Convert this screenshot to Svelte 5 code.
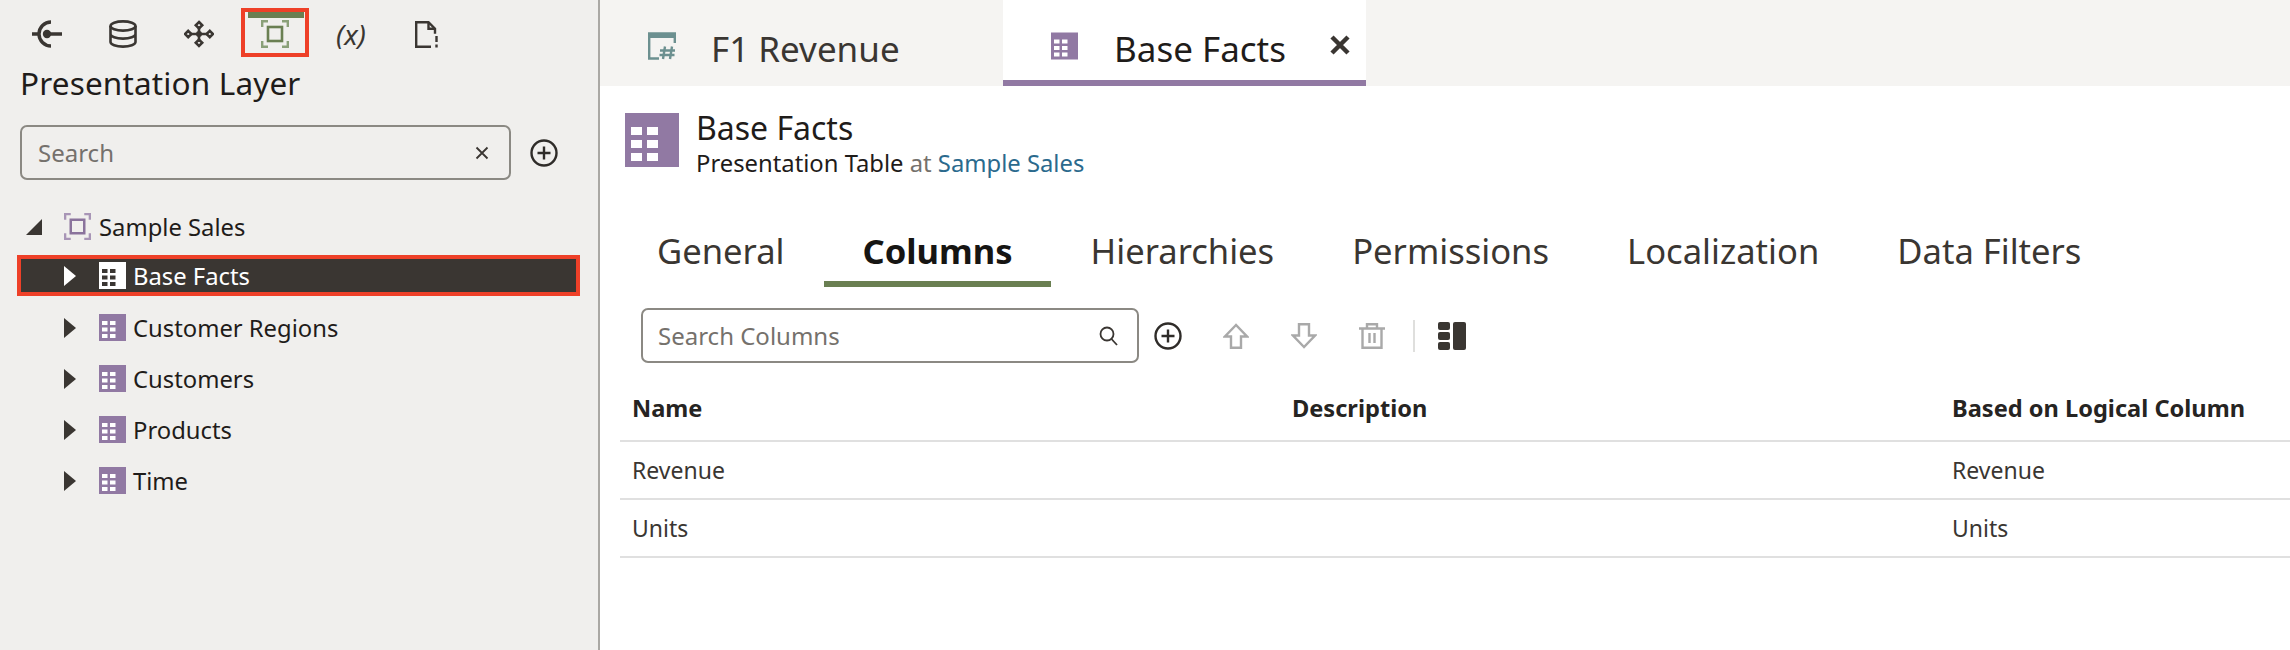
<script>
  const railIcons = ['link', 'db', 'move', 'focus', 'vars', 'doc'];
  const nodes = ['Base Facts', 'Customer Regions', 'Customers', 'Products', 'Time'];
  const detailTabs = ['General', 'Columns', 'Hierarchies', 'Permissions', 'Localization', 'Data Filters'];
  const rows = [
    { name: 'Revenue', description: '', logical: 'Revenue' },
    { name: 'Units', description: '', logical: 'Units' }
  ];
</script>

{#snippet grid(cls)}
  <svg class={cls} viewBox="0 0 54 54">
    <rect class="cell-bg" width="54" height="54" />
    {#each [14, 27, 40] as y}
      <rect class="cell" x="6" {y} width="11" height="8" />
      <rect class="cell" x="22" {y} width="11" height="8" />
    {/each}
  </svg>
{/snippet}

{#snippet focus(cls)}
  <svg class={cls} viewBox="0 0 28 28" fill="none">
    <path class="corners" d="M7 1.2H1.2V7M21 1.2h5.8V7M7 26.8H1.2V21M21 26.8h5.8V21" stroke-width="2.4" />
    <rect class="core" x="7" y="7" width="14" height="14" stroke-width="2.6" />
  </svg>
{/snippet}

{#snippet plus()}
  <svg class="plus" viewBox="0 0 28 28" fill="none" stroke="#2f2c29">
    <circle cx="14" cy="14" r="12.5" stroke-width="2.4" />
    <path d="M14 7.5v13M7.5 14h13" stroke-width="2.4" />
  </svg>
{/snippet}

<div class="shell">
  <aside class="side">
    <div class="rail">
      {#each railIcons as icon}
        <div class="rail-btn" class:on={icon === 'focus'}>
          {#if icon === 'link'}
            <svg width="30" height="28" viewBox="0 0 30 28" fill="none" stroke="#3a3632" stroke-width="3.4">
              <path d="M19 2a12 12 0 1 0 0 24" />
              <path d="M0 14h6M15 14h15" />
              <circle cx="15" cy="14" r="4.2" fill="#3a3632" stroke="none" />
            </svg>
          {:else if icon === 'db'}
            <svg width="28" height="28" viewBox="0 0 28 28" fill="none" stroke="#3a3632" stroke-width="2.6">
              <ellipse cx="14" cy="6" rx="12.5" ry="4.6" />
              <path d="M1.5 6v16c0 2.6 5.6 4.6 12.5 4.6S26.5 24.6 26.5 22V6M1.5 14c0 2.6 5.6 4.6 12.5 4.6s12.5-2 12.5-4.6" />
            </svg>
          {:else if icon === 'move'}
            <svg width="30" height="28" viewBox="0 0 30 28" fill="none" stroke="#3a3632" stroke-width="2.6">
              <path d="M15 2l3.2 3.2L15 8.4l-3.2-3.2zM15 19.6l3.2 3.2L15 26l-3.2-3.2zM4.2 10.8L7.4 14l-3.2 3.2L1 14zM25.8 10.8L29 14l-3.2 3.2L22.6 14z" />
              <path d="M15 8v12M7 14h16" />
              <circle cx="15" cy="14" r="3" fill="#3a3632" stroke="none" />
            </svg>
          {:else if icon === 'focus'}
            {@render focus('focus-green')}
          {:else if icon === 'vars'}
            <span class="vars">(x)</span>
          {:else}
            <svg width="24" height="27" viewBox="0 0 24 27" fill="none" stroke="#3a3632" stroke-width="2.4">
              <path d="M16 25.8H1.2V1.2h12.3l6.5 6.5v5" />
              <path d="M13.5 1.2v6.5H20" />
              <path d="M21.5 15v6M21.5 23.5v3" />
            </svg>
          {/if}
        </div>
      {/each}
    </div>

    <h1 class="side-title">Presentation Layer</h1>

    <div class="side-search">
      <div class="search-box">
        <span class="placeholder">Search</span>
        <svg class="clear" viewBox="0 0 14 14" stroke="#3a3632" stroke-width="1.8">
          <path d="M1.5 1.5l11 11M12.5 1.5l-11 11" />
        </svg>
      </div>
      {@render plus()}
    </div>

    <div class="tree">
      <div class="root">
        <svg class="twist-open" viewBox="0 0 16 16"><path d="M16 0v16H0z" fill="#3a3632" /></svg>
        {@render focus('focus-purple')}
        <span>Sample Sales</span>
      </div>
      {#each nodes as node, i}
        <div class="node" class:selected={i === 0}>
          <svg class="twist" viewBox="0 0 12 20"><path d="M0 0l12 10L0 20z" /></svg>
          {@render grid(i === 0 ? 'node-icon inverse' : 'node-icon')}
          <span>{node}</span>
        </div>
      {/each}
    </div>
  </aside>

  <main class="main">
    <div class="doc-tabs">
      <div class="doc-tab first">
        <svg class="calc" viewBox="0 0 28 28" fill="none" stroke="#6c9090">
          <path d="M11 26.5H1.2V1.5h25.6V11" stroke-width="2.4" />
          <path d="M1 3.5h26" stroke-width="5" />
          <path d="M17 14.5l-2 12.5M24 14.5l-2 12.5M12 18.5h15M11.5 23h15" stroke-width="2.4" />
        </svg>
        <span>F1 Revenue</span>
      </div>
      <div class="doc-tab active">
        {@render grid('tab-icon')}
        <span>Base Facts</span>
        <svg class="close" viewBox="0 0 20 20" stroke="#3a3632" stroke-width="4.5">
          <path d="M2 2l16 16M18 2L2 18" />
        </svg>
      </div>
    </div>

    <header class="head">
      {@render grid('head-icon')}
      <div>
        <div class="head-title">Base Facts</div>
        <div class="head-sub">Presentation Table <span class="at">at</span> <span class="link">Sample Sales</span></div>
      </div>
    </header>

    <nav class="detail-tabs">
      {#each detailTabs as tab}
        <div class="detail-tab" class:current={tab === 'Columns'}>{tab}</div>
      {/each}
    </nav>

    <div class="toolbar">
      <div class="search-box columns-search">
        <span class="placeholder">Search Columns</span>
        <svg class="lens" viewBox="0 0 20 20" fill="none" stroke="#3a3632" stroke-width="1.8">
          <circle cx="8" cy="8" r="6.5" />
          <path d="M12.5 13l5.5 6" />
        </svg>
      </div>
      {@render plus()}
      <svg class="tool up" viewBox="0 0 26 26" fill="none" stroke="#a9a9a9" stroke-width="2.4">
        <path d="M13 2L2 13.5h6V24.8h10V13.5h6z" />
      </svg>
      <svg class="tool down" viewBox="0 0 26 26" fill="none" stroke="#a9a9a9" stroke-width="2.4">
        <path d="M13 24L2 12.5h6V1.2h10v11.3h6z" />
      </svg>
      <svg class="tool trash" viewBox="0 0 26 26" fill="none" stroke="#a9a9a9" stroke-width="2.4">
        <path d="M0 5.5h26M8 5.5V1.2h10v4.3M3.5 5.5v19.3h19V5.5M10.5 10v10M15.5 10v10" />
      </svg>
      <div class="sep"></div>
      <svg class="layout" viewBox="0 0 28 28" fill="#3a3632">
        <rect y="0" width="12" height="8" rx="2" />
        <rect y="10" width="12" height="8" rx="2" />
        <rect y="20" width="12" height="8" rx="2" />
        <rect x="15" width="13" height="28" rx="2" />
      </svg>
    </div>

    <table class="grid-table">
      <thead>
        <tr>
          <th>Name</th>
          <th>Description</th>
          <th>Based on Logical Column</th>
        </tr>
      </thead>
      <tbody>
        {#each rows as row}
          <tr>
            <td>{row.name}</td>
            <td>{row.description}</td>
            <td>{row.logical}</td>
          </tr>
        {/each}
      </tbody>
    </table>
  </main>
</div>

<style>
  :global(body) {
    margin: 0;
    background: #fff;
  }

  .shell {
    display: flex;
    width: 2290px;
    height: 650px;
    overflow: hidden;
    font-family: "Noto Sans", "Open Sans", sans-serif;
    color: #1f1c1a;
  }

  .side {
    width: 600px;
    flex: none;
    box-sizing: border-box;
    height: 650px;
    background: #f0efed;
    border-right: 2px solid #aaa8a4;
  }

  .rail {
    display: flex;
    align-items: center;
    height: 49px;
    padding-top: 8px;
    padding-left: 9px;
  }
  .rail-btn {
    width: 76px;
    height: 49px;
    box-sizing: border-box;
    display: flex;
    align-items: center;
    justify-content: center;
    padding-top: 3px;
  }
  .rail-btn.on {
    width: 68px;
    margin: 0 4px;
    border: 4px solid #ee4028;
    padding-top: 3px;
    background: linear-gradient(#6a7f52, #6a7f52) no-repeat 3px 0 / 56px 6px;
    background-origin: padding-box;
  }
  .vars {
    font-size: 28px;
    font-style: italic;
    color: #3a3632;
  }

  .focus-green {
    width: 28px;
    height: 28px;
  }
  .focus-green .corners { stroke: #8aa078; }
  .focus-green .core { stroke: #6a7f52; }
  .focus-purple {
    width: 27px;
    height: 27px;
    margin-left: 22px;
    margin-right: 8px;
  }
  .focus-purple .corners { stroke: #a895b6; }
  .focus-purple .core { stroke: #8a739c; }

  .side-title {
    margin: 0;
    margin-top: 7px;
    padding-left: 20px;
    height: 50px;
    font-size: 31.5px;
    line-height: 38px;
    font-weight: 400;
    letter-spacing: 0.15px;
  }

  .side-search {
    display: flex;
    align-items: center;
    gap: 19px;
    padding-left: 20px;
    margin-top: 11px;
  }
  .search-box {
    display: flex;
    align-items: center;
    justify-content: space-between;
    box-sizing: border-box;
    width: 491px;
    height: 55px;
    padding: 0 20px 0 16px;
    border: 2px solid #8b8983;
    border-radius: 7px;
    font-size: 24px;
  }
  .placeholder {
    color: #75716c;
  }
  .clear {
    width: 14px;
    height: 14px;
  }
  .plus {
    width: 28px;
    height: 28px;
    flex: none;
  }

  .tree {
    margin-top: 21px;
    font-size: 23.8px;
  }
  .root {
    display: flex;
    align-items: center;
    height: 51px;
    margin-left: 26px;
  }
  .twist-open {
    width: 16px;
    height: 16px;
  }
  .node {
    display: flex;
    align-items: center;
    height: 51px;
    margin-left: 17px;
    width: 563px;
    box-sizing: border-box;
    padding-left: 47px;
  }
  .node .twist {
    width: 12px;
    height: 20px;
    margin-right: 23px;
    fill: #3a3632;
  }
  .node.selected {
    height: 41px;
    margin-top: 3px;
    margin-bottom: 6px;
    padding-left: 43px;
    background: #3a3632;
    border: 4px solid #ee4028;
    color: #fff;
  }
  .node.selected .twist {
    fill: #fff;
  }
  .node-icon {
    width: 27px;
    height: 27px;
    margin-right: 7px;
  }

  .cell-bg { fill: #9179a3; }
  .cell { fill: #fff; }
  .inverse .cell-bg { fill: #fff; }
  .inverse .cell { fill: #3a3632; }

  .main {
    flex: 1;
    min-width: 0;
  }

  .doc-tabs {
    display: flex;
    height: 86px;
    background: #f5f4f2;
  }
  .doc-tab {
    display: flex;
    align-items: center;
    box-sizing: border-box;
    font-size: 35px;
    color: #3a3632;
  }
  .doc-tab.first {
    width: 403px;
    padding-left: 48px;
    padding-top: 10px;
  }
  .calc {
    width: 28px;
    height: 28px;
    margin-right: 35px;
    margin-bottom: 4px;
  }
  .doc-tab.active {
    width: 363px;
    padding-left: 48px;
    padding-top: 16px;
    background: #fff;
    border-bottom: 6px solid #9179a3;
    color: #1f1c1a;
  }
  .tab-icon {
    width: 27px;
    height: 28px;
    margin-right: 36px;
    margin-bottom: 4px;
  }
  .close {
    width: 20px;
    height: 20px;
    margin-left: 44px;
    margin-bottom: 6px;
  }

  .head {
    display: flex;
    margin-top: 27px;
    margin-left: 25px;
    gap: 17px;
  }
  .head-icon {
    width: 54px;
    height: 54px;
  }
  .head-title {
    font-size: 32px;
    line-height: 34px;
    margin-top: -2px;
    margin-bottom: 2px;
  }
  .head-sub {
    font-size: 23.8px;
    line-height: 33px;
  }
  .at { color: #75716c; }
  .link { color: #2b6a8d; }

  .detail-tabs {
    display: flex;
    gap: 2px;
    margin-top: 41px;
    margin-left: 19px;
  }
  .detail-tab {
    box-sizing: border-box;
    height: 66px;
    padding: 6px 38px 0;
    font-size: 34.6px;
    line-height: 48px;
    color: #3a3632;
  }
  .detail-tab.current {
    font-weight: 700;
    color: #161513;
    border-bottom: 6px solid #6a7f52;
  }

  .toolbar {
    display: flex;
    align-items: center;
    margin-top: 21px;
    margin-left: 41px;
  }
  .columns-search {
    width: 498px;
    padding-left: 15px;
    padding-right: 18px;
    background: #fff;
  }
  .lens {
    width: 20px;
    height: 20px;
  }
  .toolbar .plus {
    margin-left: 15px;
  }
  .tool {
    width: 26px;
    height: 26px;
  }
  .up { margin-left: 41px; }
  .down { margin-left: 42px; }
  .trash { margin-left: 42px; }
  .sep {
    width: 2px;
    height: 32px;
    margin-left: 28px;
    background: #dfdfdd;
  }
  .layout {
    width: 28px;
    height: 28px;
    margin-left: 23px;
  }

  .grid-table {
    width: 1670px;
    margin-top: 12px;
    margin-left: 20px;
    border-collapse: collapse;
    table-layout: fixed;
    font-size: 23px;
  }
  .grid-table th {
    height: 65px;
    padding: 0 0 0 12px;
    text-align: left;
    font-size: 23.6px;
    font-weight: 700;
    color: #262422;
    border-bottom: 2px solid #e0e0e0;
  }
  .grid-table td {
    height: 56px;
    padding: 0 0 0 12px;
    color: #3a3632;
    border-bottom: 2px solid #e0e0e0;
  }
  .grid-table th:nth-child(1),
  .grid-table th:nth-child(2) {
    width: 648px;
  }
</style>
